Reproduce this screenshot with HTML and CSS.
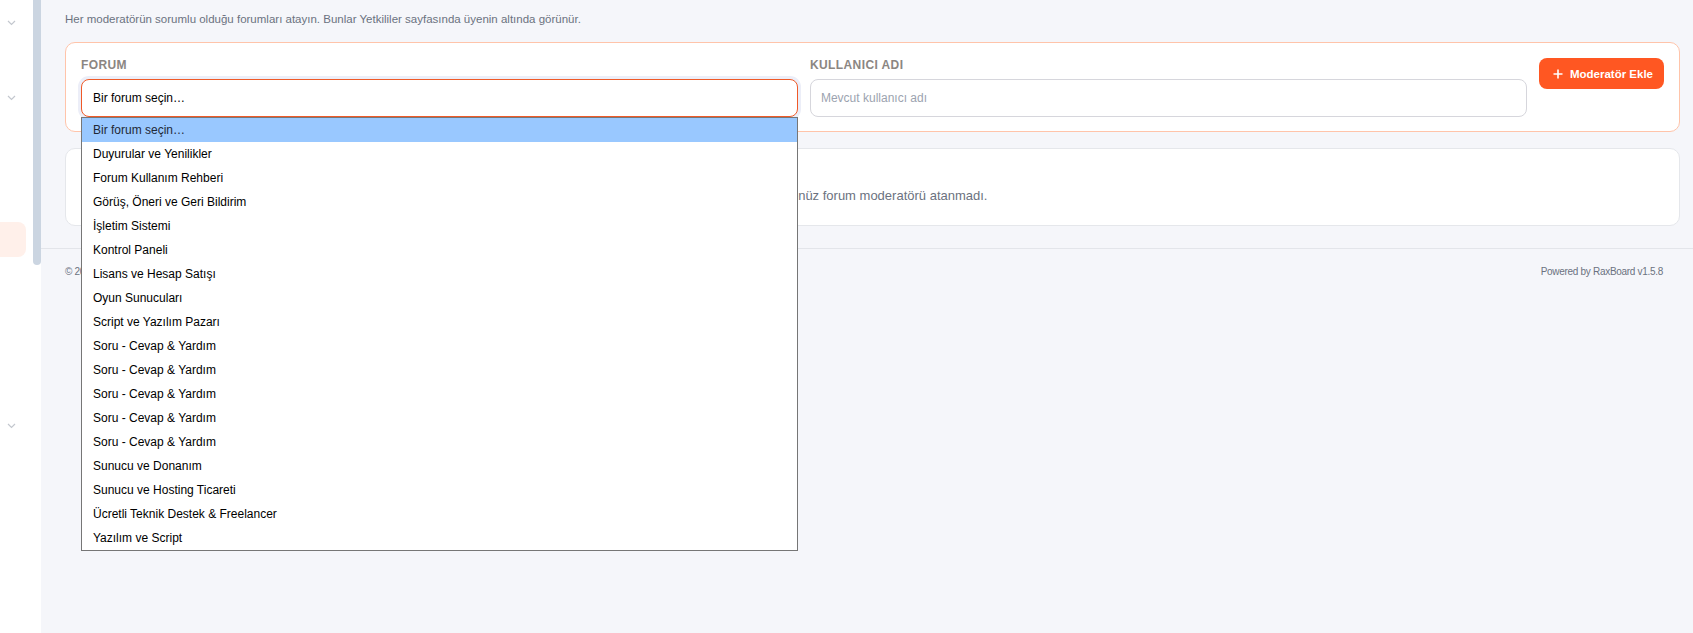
FILE: index.html
```html
<!DOCTYPE html>
<html lang="tr">

<head>
    <meta charset="UTF-8">
    <meta name="viewport" content="width=device-width, initial-scale=1.0">
    <title>Forum Moderatörleri</title>
    <link rel="stylesheet" href="styles.css">
</head>

<body>
    <div class="layout">
        <aside class="sidebar">
            <div class="side-nav">
                <div class="nav-group first">
                    <svg class="chev" width="9" height="6" viewBox="0 0 9 6"><path d="M1 1l3.5 3.5L8 1" fill="none" stroke="#c3c7ce" stroke-width="1.2"/></svg>
                </div>
                <div class="nav-group second">
                    <svg class="chev" width="9" height="6" viewBox="0 0 9 6"><path d="M1 1l3.5 3.5L8 1" fill="none" stroke="#c3c7ce" stroke-width="1.2"/></svg>
                </div>
                <div class="nav-item active"></div>
                <div class="nav-group third">
                    <svg class="chev" width="9" height="6" viewBox="0 0 9 6"><path d="M1 1l3.5 3.5L8 1" fill="none" stroke="#c3c7ce" stroke-width="1.2"/></svg>
                </div>
            </div>
            <div class="side-track">
                <div class="side-thumb"></div>
            </div>
        </aside>

        <main class="main">
            <div class="content">
                <p class="intro">Her moderatörün sorumlu olduğu forumları atayın. Bunlar Yetkililer sayfasında üyenin altında görünür.</p>

                <div class="card assign">
                    <div class="field">
                        <label>Forum</label>
                        <div class="select-wrap">
                            <div class="select">Bir forum seçin…</div>
                            <ul class="dropdown">
                                <li class="selected">Bir forum seçin…</li>
                                <li>Duyurular ve Yenilikler</li>
                                <li>Forum Kullanım Rehberi</li>
                                <li>Görüş, Öneri ve Geri Bildirim</li>
                                <li>İşletim Sistemi</li>
                                <li>Kontrol Paneli</li>
                                <li>Lisans ve Hesap Satışı</li>
                                <li>Oyun Sunucuları</li>
                                <li>Script ve Yazılım Pazarı</li>
                                <li>Soru - Cevap &amp; Yardım</li>
                                <li>Soru - Cevap &amp; Yardım</li>
                                <li>Soru - Cevap &amp; Yardım</li>
                                <li>Soru - Cevap &amp; Yardım</li>
                                <li>Soru - Cevap &amp; Yardım</li>
                                <li>Sunucu ve Donanım</li>
                                <li>Sunucu ve Hosting Ticareti</li>
                                <li>Ücretli Teknik Destek &amp; Freelancer</li>
                                <li>Yazılım ve Script</li>
                            </ul>
                        </div>
                    </div>
                    <div class="field">
                        <label for="username">Kullanıcı Adı</label>
                        <input type="text" id="username" placeholder="Mevcut kullanıcı adı">
                    </div>
                    <button type="button" class="btn-add">
                        <svg width="10" height="10" viewBox="0 0 10 10"><path d="M5 0.5v9M0.5 5h9" stroke="#fff" stroke-width="1.6"/></svg>
                        Moderatör Ekle
                    </button>
                </div>

                <div class="card list">
                    <p class="empty">
                        <svg width="16" height="16" viewBox="0 0 16 16"><circle cx="8" cy="8" r="6.5" fill="none" stroke="#9ca3af" stroke-width="1.3"/></svg>
                        Henüz forum moderatörü atanmadı.
                    </p>
                </div>
            </div>

            <footer class="footer">
                <span>© 2025</span>
                <span>Powered by RaxBoard v1.5.8</span>
            </footer>
        </main>
    </div>
</body>

</html>
```

FILE: styles.css
```css
* {
    box-sizing: border-box;
}

body {
    margin: 0;
    font-family: "Liberation Sans", Arial, sans-serif;
    background-color: #f5f6fa;
    color: #111;
}

.layout {
    display: flex;
    min-height: 633px;
}

/* sidebar (collapsed, scrolled) */
.sidebar {
    width: 41px;
    flex-shrink: 0;
    display: flex;
    background-color: #fff;
}

.side-nav {
    width: 33px;
    display: flex;
    flex-direction: column;
}

.nav-group {
    height: 12px;
    padding-left: 7px;
    display: flex;
    align-items: center;
}

.nav-group.first {
    margin-top: 17px;
}

.nav-group.second {
    margin-top: 63px;
}

.nav-item.active {
    width: 26px;
    height: 35px;
    margin-top: 118px;
    background-color: #fff0ea;
    border-radius: 0 8px 8px 0;
}

.nav-group.third {
    margin-top: 163px;
}

.side-track {
    width: 8px;
}

.side-thumb {
    height: 265px;
    background-color: #cbd5e1;
    border-radius: 0 0 4px 4px;
}

/* main */
.main {
    flex: 1;
    display: flex;
    flex-direction: column;
    background-color: #f5f6fa;
}

.content {
    padding: 11px 13px 22px 24px;
}

.intro {
    margin: 0 0 15px;
    font-size: 11.5px;
    line-height: 16px;
    color: #6b7280;
}

.card {
    background-color: #fff;
    border: 1px solid #e5e7eb;
    border-radius: 10px;
}

.assign {
    border-color: #ffc4aa;
    padding: 15px 15px 14px;
    display: grid;
    grid-template-columns: 1fr 1fr auto;
    column-gap: 12px;
    align-items: start;
}

.field label {
    display: block;
    margin-bottom: 6px;
    font-size: 12px;
    line-height: 15px;
    font-weight: bold;
    letter-spacing: 0.4px;
    text-transform: uppercase;
    color: #8b8682;
}

.select-wrap {
    position: relative;
}

.select,
.field input {
    width: 100%;
    height: 38px;
    padding: 0 11px;
    border-radius: 8px;
    font-family: inherit;
    font-size: 12px;
    background-color: #fff;
}

.select {
    display: flex;
    align-items: center;
    border: 1px solid #f05a28;
    box-shadow: 0 0 0 3px #eceef8;
    color: #000;
}

.field input {
    border: 1px solid #d6d6dc;
    padding-left: 10px;
    outline: none;
}

.field input::placeholder {
    color: #9ca3af;
}

/* open native list */
.dropdown {
    position: absolute;
    top: 100%;
    left: 0;
    width: 100%;
    margin: 0;
    padding: 0;
    list-style: none;
    background-color: #fff;
    border: 1px solid #767676;
    z-index: 10;
}

.dropdown li {
    height: 24px;
    line-height: 24px;
    padding-left: 11px;
    font-size: 12px;
    color: #000;
}

.dropdown li.selected {
    background-color: #99c8ff;
    color: #1f2937;
}

.btn-add {
    display: flex;
    align-items: center;
    gap: 7px;
    height: 31px;
    padding: 0 11px 0 14px;
    border: none;
    border-radius: 8px;
    background-color: #ff5722;
    color: #fff;
    font-family: inherit;
    font-size: 11.5px;
    font-weight: bold;
    cursor: pointer;
}

.list {
    margin-top: 16px;
    padding: 39px 14px 21px;
}

.empty {
    margin: 0;
    display: flex;
    justify-content: center;
    align-items: center;
    gap: 8px;
    font-size: 13px;
    line-height: 16px;
    color: #6b7280;
}

.footer {
    display: flex;
    justify-content: space-between;
    border-top: 1px solid #e3e5ea;
    padding: 16px 30px 0 24px;
    font-size: 10px;
    letter-spacing: -0.3px;
    line-height: 14px;
    color: #6b7280;
}
```
